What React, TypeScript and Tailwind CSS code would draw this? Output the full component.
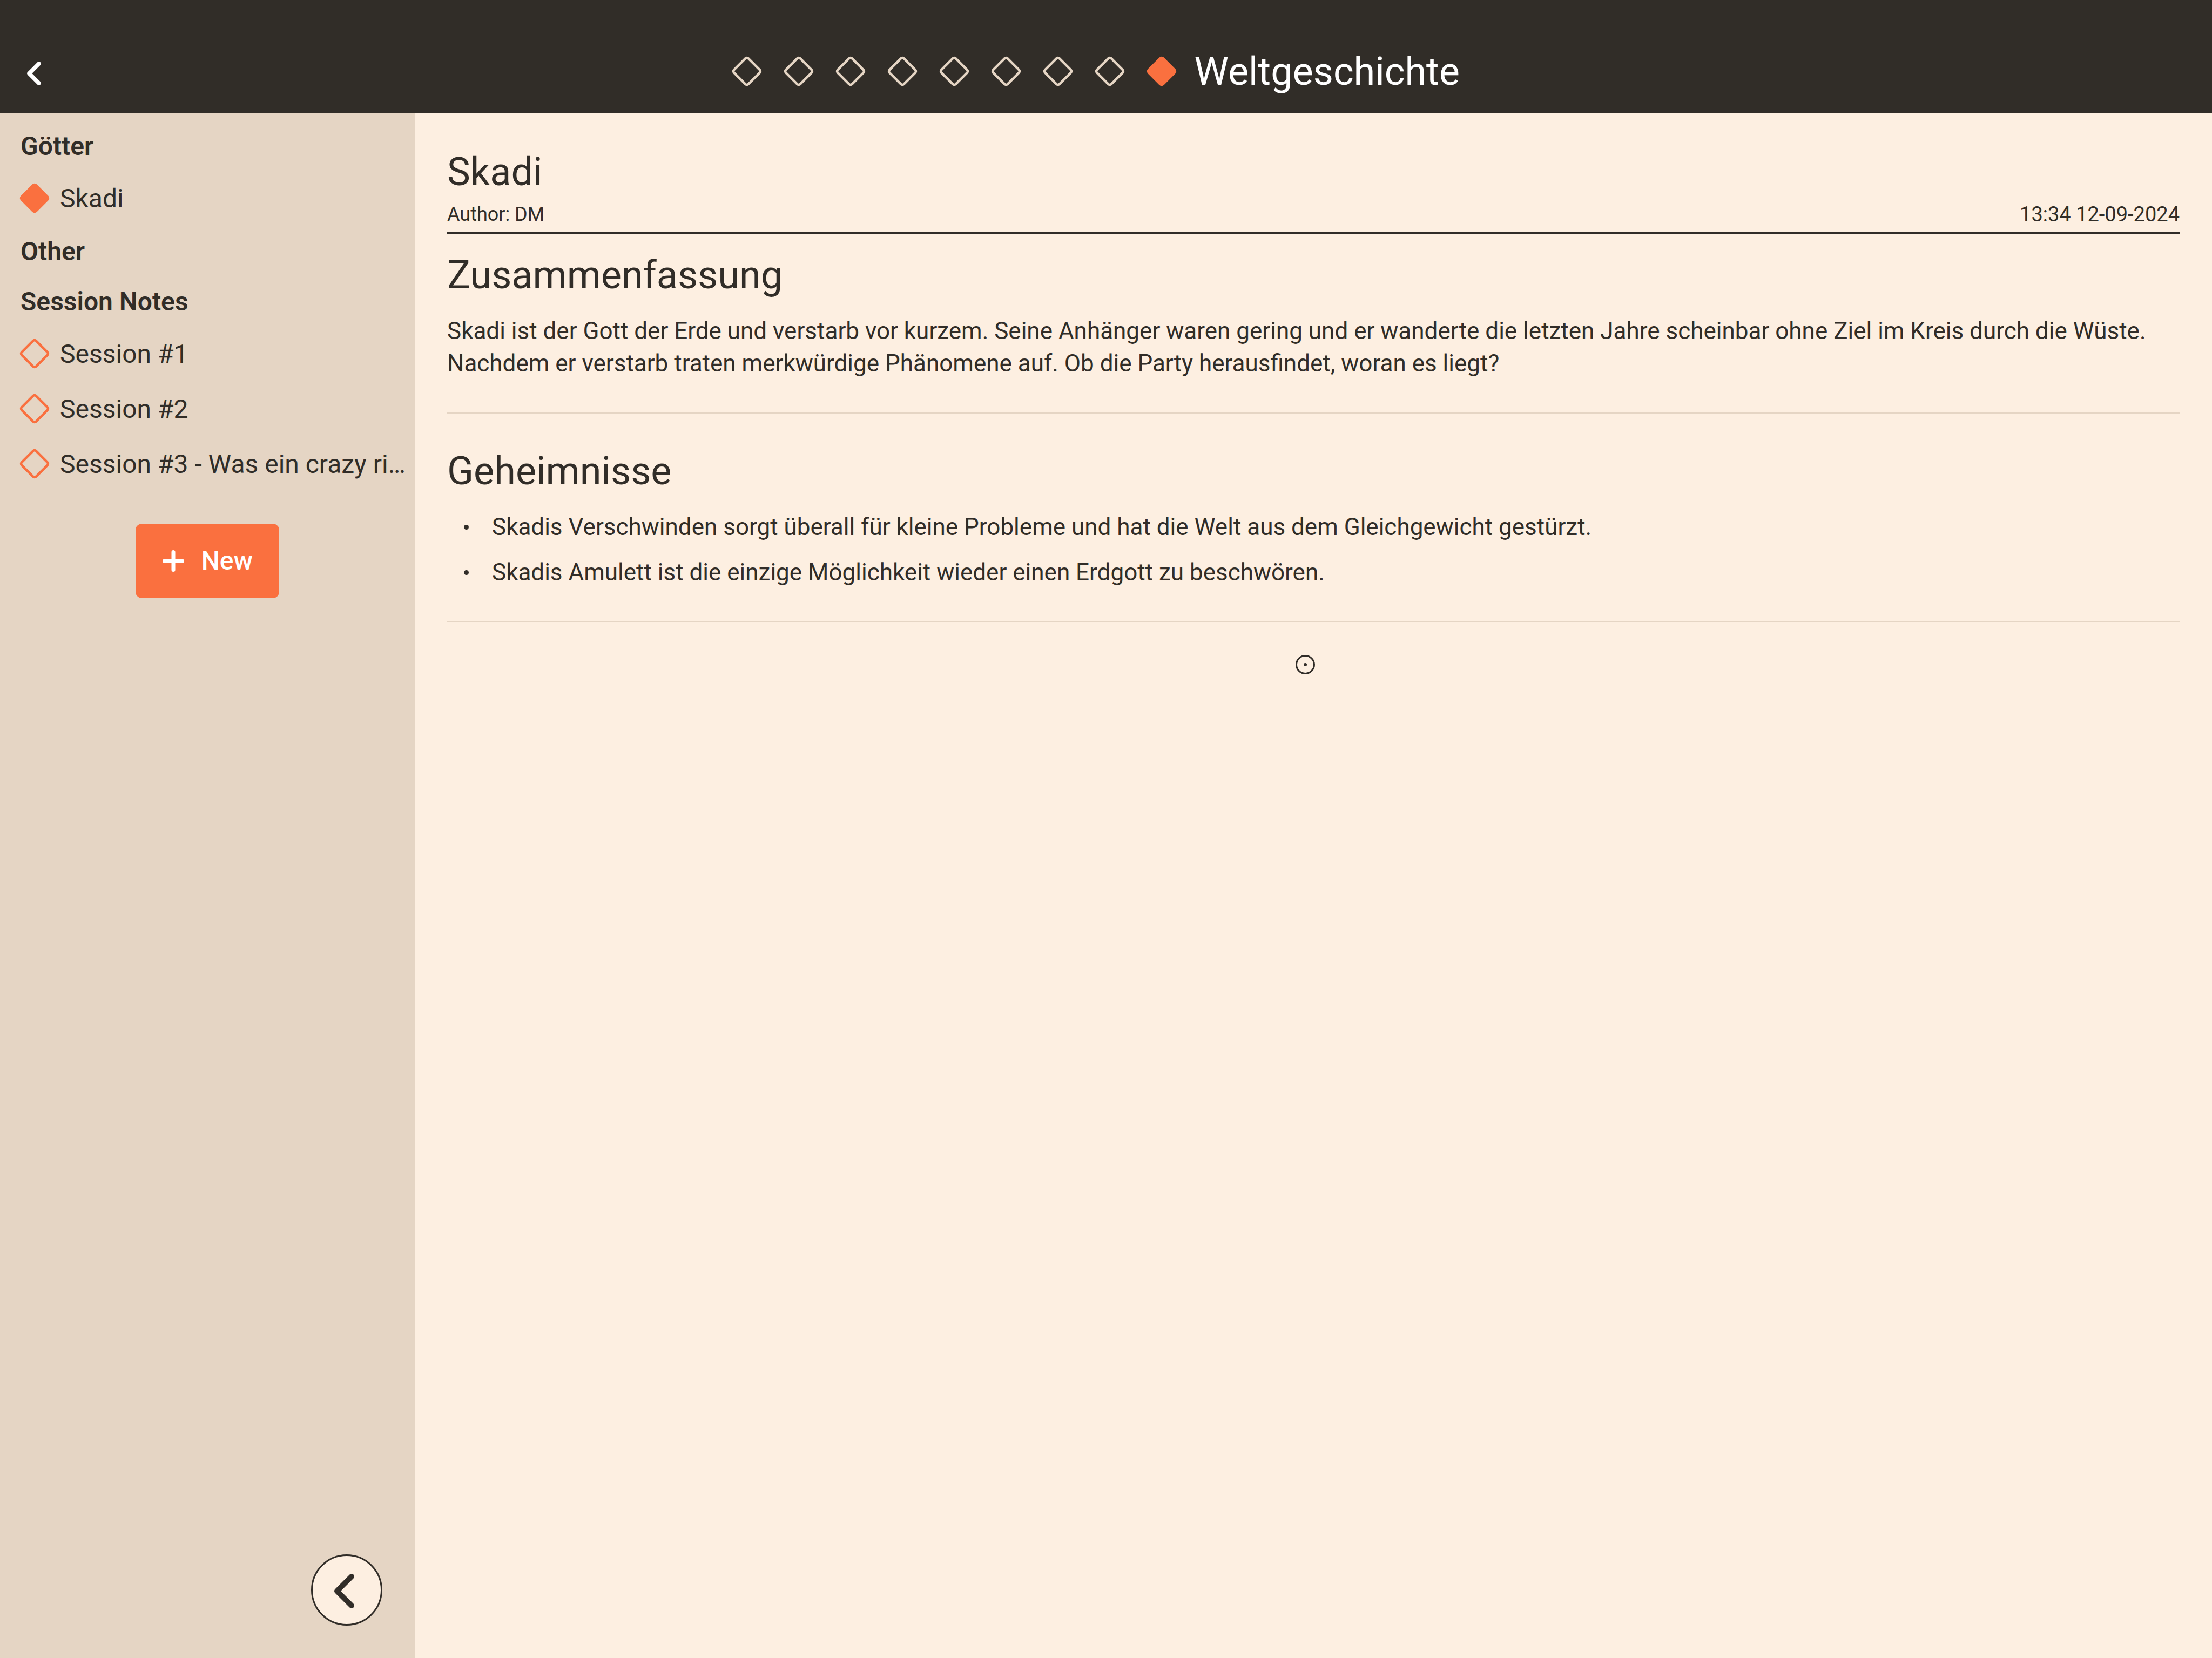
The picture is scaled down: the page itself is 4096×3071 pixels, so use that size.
import type { ReactNode } from "react";

function Diamond({ filled = false, className = "" }: { filled?: boolean; className?: string }) {
  const stroke = 4.5;
  const size = filled ? 42 : 42 - stroke;
  const start = 30 - size / 2;
  return (
    <svg viewBox="0 0 60 60" className={`size-[60px] shrink-0 ${className}`} aria-hidden="true">
      <rect
        x={start}
        y={start}
        width={size}
        height={size}
        rx={filled ? 6 : 6 - stroke / 2}
        transform="rotate(45 30 30)"
        fill={filled ? "currentColor" : "none"}
        stroke={filled ? "none" : "currentColor"}
        strokeWidth={stroke}
      />
    </svg>
  );
}

const steps = [1, 2, 3, 4, 5, 6, 7, 8];

const groups = [
  { title: "Götter", items: [{ label: "Skadi", active: true }] },
  { title: "Other", items: [] },
  {
    title: "Session Notes",
    items: [
      { label: "Session #1", active: false },
      { label: "Session #2", active: false },
      { label: "Session #3 - Was ein crazy ri…", active: false },
    ],
  },
];

const secrets = [
  "Skadis Verschwinden sorgt überall für kleine Probleme und hat die Welt aus dem Gleichgewicht gestürzt.",
  "Skadis Amulett ist die einzige Möglichkeit wieder einen Erdgott zu beschwören.",
];

function Header() {
  return (
    <header className="grid grid-cols-[1fr_auto_1fr] items-center bg-[#312D28] pt-[54px] text-white">
      <div className="flex h-[155px] items-center pl-9">
        <button type="button" aria-label="Zurück" className="flex size-[54px] items-center justify-center pt-2">
          <svg viewBox="0 0 54 54" className="size-[54px] shrink-0" fill="none" aria-hidden="true">
            <path
              d="M36 9 L18 27 L36 45"
              stroke="currentColor"
              strokeWidth="7.5"
              strokeLinecap="round"
              strokeLinejoin="round"
            />
          </svg>
        </button>
      </div>
      <div className="flex items-center gap-9 pr-10">
        {steps.map((step) => (
          <button key={step} type="button" aria-label={`Seite ${step}`} className="text-[#E5D5C4]">
            <Diamond />
          </button>
        ))}
        <div className="flex items-center gap-[30px]">
          <Diamond filled className="text-[#FA703F]" />
          <h1 className="pt-0.5 text-[72px] leading-[96px]">Weltgeschichte</h1>
        </div>
      </div>
    </header>
  );
}

function Sidebar() {
  return (
    <aside className="flex w-[768px] shrink-0 flex-col justify-between bg-[#E5D5C4]">
      <nav className="pt-[15px]">
        {groups.map((group) => (
          <section key={group.title}>
            <h2 className="pl-[38px] text-[48px] leading-[93px] font-semibold">{group.title}</h2>
            <ul>
              {group.items.map((item) => (
                <li key={item.label}>
                  <a href="#" className="flex h-[102px] items-center gap-[17px] pr-2 pl-[34px]">
                    <Diamond filled={item.active} className="mb-0.5 text-[#FA703F]" />
                    <span className="truncate text-[48px] leading-[60px]">{item.label}</span>
                  </a>
                </li>
              ))}
            </ul>
          </section>
        ))}
        <div className="mt-[59px] flex justify-center">
          <button
            type="button"
            className="flex h-[138px] items-center gap-[31px] rounded-xl bg-[#FA703F] px-[49px] text-[48px] font-medium text-white"
          >
            <svg viewBox="0 0 42 42" className="size-[42px]" aria-hidden="true">
              <path d="M21 4.500V37.500M4.500 21H37.500" stroke="currentColor" strokeWidth="7" strokeLinecap="round" />
            </svg>
            New
          </button>
        </div>
      </nav>
      <div className="flex justify-end p-[60px]">
        <button
          type="button"
          aria-label="Seitenleiste einklappen"
          className="flex size-[132px] items-center justify-center rounded-full border-3 border-[#312D28] bg-[#FDEFE1]"
        >
          <svg viewBox="0 0 132 132" className="size-[132px] shrink-0" fill="none" aria-hidden="true">
            <path
              d="M75 41 L48 68 L75 95"
              stroke="currentColor"
              strokeWidth="10"
              strokeLinecap="round"
              strokeLinejoin="round"
            />
          </svg>
        </button>
      </div>
    </aside>
  );
}

function Heading({ children, className }: { children: ReactNode; className: string }) {
  return <h3 className={`text-[72px] leading-[84px] ${className}`}>{children}</h3>;
}

function Article() {
  return (
    <main className="flex min-w-0 grow flex-col px-[60px] pt-[62px]">
      <header className="border-b-3 border-[#312D28] pb-[9px]">
        <h2 className="text-[72px] leading-[96px]">Skadi</h2>
        <div className="mt-1.5 flex justify-between leading-[48px]">
          <span className="text-[36px]">Author: DM</span>
          <time className="text-[38px]">13:34 12-09-2024</time>
        </div>
      </header>
      <section className="border-b-3 border-[#E5D5C4] pb-[60px]">
        <Heading className="mt-[35px]">Zusammenfassung</Heading>
        <p className="mt-[31px] text-[44px] leading-[60px]">
          Skadi ist der Gott der Erde und verstarb vor kurzem. Seine Anhänger waren gering und er wanderte die letzten
          Jahre scheinbar ohne Ziel im Kreis durch die Wüste. Nachdem er verstarb traten merkwürdige Phänomene auf. Ob
          die Party herausfindet, woran es liegt?
        </p>
      </section>
      <section className="border-b-3 border-[#E5D5C4] pb-[60px]">
        <Heading className="mt-[65px]">Geheimnisse</Heading>
        <ul className="mt-[31px] flex flex-col gap-6 text-[44px] leading-[60px]">
          {secrets.map((secret) => (
            <li key={secret} className="flex items-center gap-[43px] pl-[31px]">
              <span className="size-[9px] shrink-0 rounded-full bg-[#312D28]" />
              {secret}
            </li>
          ))}
        </ul>
      </section>
      <svg viewBox="0 0 36 36" className="mt-[60px] mr-[30px] size-9 self-center" fill="none" aria-hidden="true">
        <circle cx="18" cy="18" r="16.500" stroke="currentColor" strokeWidth="3" />
        <circle cx="18" cy="18" r="3" fill="currentColor" />
      </svg>
    </main>
  );
}

export default function App() {
  return (
    <div className="flex min-h-screen flex-col bg-[#FDEFE1] font-['Roboto',sans-serif] text-[#312D28]">
      <Header />
      <div className="flex grow">
        <Sidebar />
        <Article />
      </div>
    </div>
  );
}
